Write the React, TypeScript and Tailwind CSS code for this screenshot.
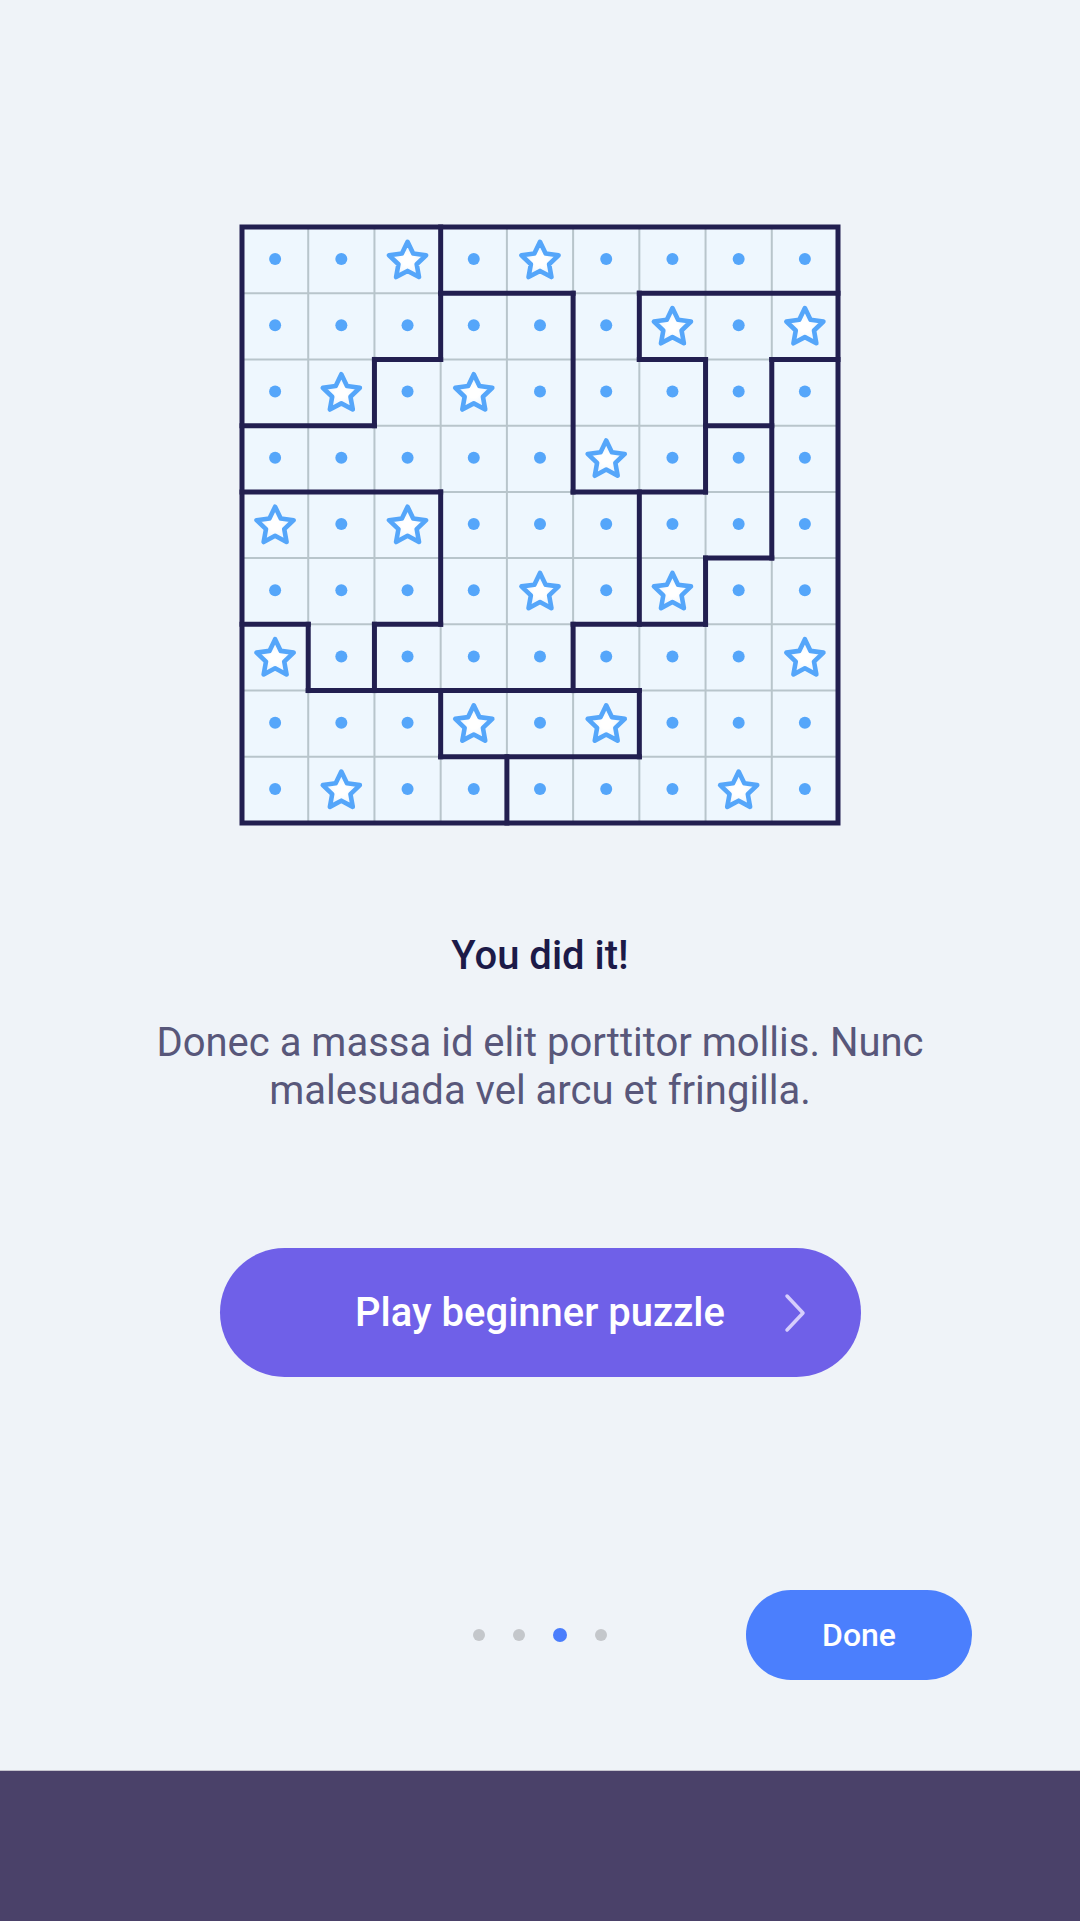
import React from "react";

const O = 6;
const C = 596 / 9;

const stars: [number, number][] = [
  [0, 2], [0, 4], [1, 6], [1, 8], [2, 1], [2, 3], [3, 5], [4, 0], [4, 2],
  [5, 4], [5, 6], [6, 0], [6, 8], [7, 3], [7, 5], [8, 1], [8, 7],
];

// vertical thick segments: [x, y1, y2]
const vSegs: [number, number, number][] = [
  [3, 0, 2], [2, 2, 3], [5, 1, 4], [6, 1, 2], [7, 2, 4], [8, 2, 5],
  [3, 4, 6], [6, 4, 6], [7, 5, 6], [1, 6, 7], [2, 6, 7], [5, 6, 7],
  [3, 7, 8], [6, 7, 8], [4, 8, 9],
];
// horizontal thick segments: [y, x1, x2]
const hSegs: [number, number, number][] = [
  [1, 3, 5], [1, 6, 9], [2, 2, 3], [2, 6, 7], [2, 8, 9], [3, 0, 2],
  [3, 7, 8], [4, 0, 3], [4, 5, 7], [5, 7, 8], [6, 0, 1], [6, 2, 3],
  [6, 5, 7], [7, 1, 6], [8, 3, 6],
];

function starPath(cx: number, cy: number, R: number, r: number) {
  const pts: string[] = [];
  for (let i = 0; i < 10; i++) {
    const rad = i % 2 === 0 ? R : r;
    const a = -Math.PI / 2 + (i * Math.PI) / 5;
    pts.push(`${(cx + rad * Math.cos(a)).toFixed(2)},${(cy + rad * Math.sin(a)).toFixed(2)}`);
  }
  return `M${pts.join("L")}Z`;
}

function Grid() {
  const isStar = (r: number, c: number) => stars.some(([a, b]) => a === r && b === c);
  const cells: React.ReactNode[] = [];
  for (let r = 0; r < 9; r++) {
    for (let c = 0; c < 9; c++) {
      const cx = O + (c + 0.5) * C;
      const cy = O + (r + 0.5) * C;
      if (isStar(r, c)) {
        cells.push(
          <path
            key={`s${r}-${c}`}
            d={starPath(cx, cy + 1.2, 19.5, 9.6)}
            fill="url(#starGlow)"
            stroke="#55a6fa"
            strokeWidth={4.6}
            strokeLinejoin="round"
          />
        );
      } else {
        cells.push(<circle key={`d${r}-${c}`} cx={cx} cy={cy - 1} r={6} fill="#55a6fa" />);
      }
    }
  }
  const thin: React.ReactNode[] = [];
  for (let i = 1; i < 9; i++) {
    thin.push(
      <line key={`tv${i}`} x1={O + i * C} y1={O} x2={O + i * C} y2={O + 9 * C} stroke="#b8c5cb" strokeWidth={2} />
    );
    thin.push(
      <line key={`th${i}`} x1={O} y1={O + i * C} x2={O + 9 * C} y2={O + i * C} stroke="#b8c5cb" strokeWidth={2} />
    );
  }
  return (
    <svg width={608} height={608} viewBox="0 0 608 608" className="block">
      <defs>
        <radialGradient id="starGlow" cx="50%" cy="52%" r="50%">
          <stop offset="0%" stopColor="#ffffff" />
          <stop offset="30%" stopColor="#ffffff" />
          <stop offset="75%" stopColor="#eef7ff" />
          <stop offset="100%" stopColor="#eef7ff" />
        </radialGradient>
      </defs>
      <rect x={O} y={O} width={9 * C} height={9 * C} fill="#eef7fe" />
      {thin}
      {cells}
      {vSegs.map(([x, y1, y2], i) => (
        <line
          key={`v${i}`}
          x1={O + x * C}
          y1={O + y1 * C}
          x2={O + x * C}
          y2={O + y2 * C}
          stroke="#221f50"
          strokeWidth={5}
          strokeLinecap="square"
        />
      ))}
      {hSegs.map(([y, x1, x2], i) => (
        <line
          key={`h${i}`}
          x1={O + x1 * C}
          y1={O + y * C}
          x2={O + x2 * C}
          y2={O + y * C}
          stroke="#221f50"
          strokeWidth={5}
          strokeLinecap="square"
        />
      ))}
      <rect x={O} y={O} width={9 * C} height={9 * C} fill="none" stroke="#221f50" strokeWidth={5} />
    </svg>
  );
}

export default function App() {
  return (
    <div className="w-[1080px] h-[1921px] bg-[#eff3f8] flex flex-col" style={{ fontFamily: "Roboto, 'Noto Sans', sans-serif" }}>
      <div className="h-[1770px] flex flex-col items-center">
        <div className="mt-[221px]">
          <Grid />
        </div>
        <h1 className="mt-[103px] text-[40px] leading-[48px] font-medium text-[#1c1a48] text-center">You did it!</h1>
        <p className="mt-[39px] w-[840px] text-[40px] leading-[48px] text-[#58577a] text-center">
          Donec a massa id elit porttitor mollis. Nunc malesuada vel arcu et fringilla.
        </p>
        <button className="relative mt-[133px] w-[641px] h-[129px] rounded-full bg-[#6f60e8] flex items-center justify-center">
          <span className="text-[40px] leading-[48px] font-medium text-white">Play beginner puzzle</span>
          <svg className="absolute right-[55px] top-[45px]" width="22" height="40" viewBox="0 0 22 40">
            <polyline points="3,3 19,20 3,37" fill="none" stroke="#d6cefc" strokeWidth={3.5} strokeLinecap="round" strokeLinejoin="round" />
          </svg>
        </button>
        <div className="mt-[213px] w-full grid grid-cols-[1fr_auto_1fr] items-center">
          <div />
          <div className="flex items-center gap-[28px]">
            <span className="w-[12px] h-[12px] rounded-full bg-[#c4c7cb]" />
            <span className="w-[12px] h-[12px] rounded-full bg-[#c4c7cb]" />
            <span className="w-[14px] h-[14px] rounded-full bg-[#4a7dfc]" />
            <span className="w-[12px] h-[12px] rounded-full bg-[#c4c7cb]" />
          </div>
          <div className="flex justify-end pr-[108px]">
            <button className="w-[226px] h-[90px] rounded-full bg-[#4b7ffd] text-white text-[32px] font-medium flex items-center justify-center">
              Done
            </button>
          </div>
        </div>
      </div>
      <div className="h-[151px] bg-[#4a4169] border-t border-[#c5c3cd]" />
    </div>
  );
}
